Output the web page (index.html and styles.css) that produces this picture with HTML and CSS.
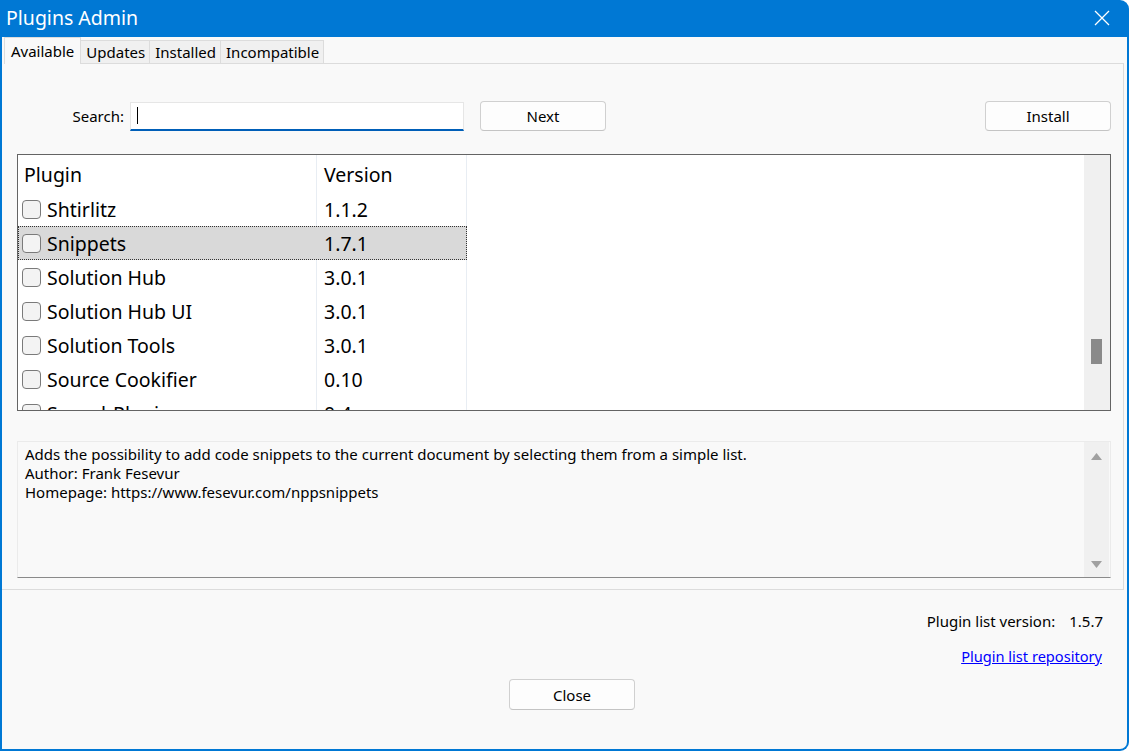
FILE: index.html
```html
<!DOCTYPE html>
<html>
<head>
<meta charset="utf-8">
<link rel="stylesheet" href="styles.css">
</head>
<body>
<div class="window">
  <div class="titlebar">
    <span class="title">Plugins Admin</span>
    <svg class="close-x" width="16" height="16" viewBox="0 0 16 16"><path d="M1 1L15 15M15 1L1 15" stroke="#fff" stroke-width="1.3" fill="none"/></svg>
  </div>
  <div class="client">
    <div class="tabs">
      <div class="tab active">Available</div>
      <div class="tab">Updates</div>
      <div class="tab">Installed</div>
      <div class="tab">Incompatible</div>
      <div class="tab-fill"></div>
    </div>
    <div class="panel">
      <div class="search-row">
        <label class="search-label">Search:</label>
        <div class="search-input"><span class="caret"></span></div>
        <button class="btn next">Next</button>
        <div class="spacer"></div>
        <button class="btn install">Install</button>
      </div>
      <div class="list">
        <div class="list-body">
          <div class="row header"><div class="c1"><span class="htext">Plugin</span></div><div class="c2">Version</div></div>
          <div class="row"><div class="c1"><span class="cb"></span>Shtirlitz</div><div class="c2">1.1.2</div></div>
          <div class="row selected"><div class="c1"><span class="cb"></span>Snippets</div><div class="c2">1.7.1</div></div>
          <div class="row"><div class="c1"><span class="cb"></span>Solution Hub</div><div class="c2">3.0.1</div></div>
          <div class="row"><div class="c1"><span class="cb"></span>Solution Hub UI</div><div class="c2">3.0.1</div></div>
          <div class="row"><div class="c1"><span class="cb"></span>Solution Tools</div><div class="c2">3.0.1</div></div>
          <div class="row"><div class="c1"><span class="cb"></span>Source Cookifier</div><div class="c2">0.10</div></div>
          <div class="row"><div class="c1"><span class="cb"></span>SpeechPlugin</div><div class="c2">0.4</div></div>
        </div>
        <div class="vscroll"><div class="thumb"></div></div>
      </div>
      <div class="desc">
        <div class="desc-text">Adds the possibility to add code snippets to the current document by selecting them from a simple list.<br>Author: Frank Fesevur<br>Homepage: https://www.fesevur.com/nppsnippets</div>
        <div class="dscroll">
          <svg width="11" height="7" viewBox="0 0 11 7"><path d="M0 7L5.5 0L11 7Z" fill="#a0a0a0"/></svg>
          <svg width="11" height="7" viewBox="0 0 11 7"><path d="M0 0L5.5 7L11 0Z" fill="#a0a0a0"/></svg>
        </div>
      </div>
    </div>
    <div class="footer">
      <div class="ver"><span>Plugin list version:</span><span>1.5.7</span></div>
      <a class="repo" href="#">Plugin list repository</a>
      <div class="close-row"><button class="btn close">Close</button></div>
    </div>
  </div>
</div>
</body>
</html>
```

FILE: styles.css
```css
html, body {
  margin: 0;
  padding: 0;
  background: #ffffff;
}
body {
  font-family: "Noto Sans", "Open Sans", sans-serif;
  color: #000;
}
.window {
  width: 1129px;
  height: 751px;
  box-sizing: border-box;
  background: #0078d4;
  border-radius: 0 9px 9px 0;
  padding: 0 2px 2px 2px;
  display: flex;
  flex-direction: column;
  overflow: hidden;
}
.titlebar {
  height: 37px;
  flex: none;
  display: flex;
  align-items: center;
  justify-content: space-between;
  padding: 0 17px 0 4px;
  color: #fff;
}
.title {
  font-size: 19.5px;
  position: relative;
  top: -1px;
}
.close-x {
  margin-top: -1px;
}
.client {
  flex: 1;
  background: #f9f9f9;
  border-radius: 0 0 7px 0;
  display: flex;
  flex-direction: column;
}
.tabs {
  display: flex;
  height: 27px;
  align-items: flex-end;
  font-size: 15px;
  padding-left: 2px;
}
.tab {
  height: 24px;
  box-sizing: border-box;
  background: #f0f0f0;
  border: 1px solid #dcdcdc;
  border-bottom: none;
  border-left: none;
  padding: 0 4px 0 5px;
  line-height: 23px;
  box-shadow: inset 0 -1px 0 #dcdcdc;
}
.tab.active {
  height: 27px;
  background: #f9f9f9;
  border-left: 1px solid #dcdcdc;
  box-shadow: none;
  padding: 0 6px;
  line-height: 27px;
}
.tab-fill {
  flex: 1;
  height: 1px;
  background: #dcdcdc;
  margin-right: 3px;
}
.panel {
  height: 526px;
  box-sizing: border-box;
  border-right: 1px solid #dcdcdc;
  border-bottom: 1px solid #dcdcdc;
  margin-right: 3px;
  padding: 37px 12px 0 15px;
  display: flex;
  flex-direction: column;
}
.search-row {
  display: flex;
  align-items: center;
  height: 30px;
  font-size: 15px;
}
.search-label {
  width: 107px;
  text-align: right;
  padding-right: 6px;
  flex: none;
}
.search-input {
  width: 334px;
  height: 29px;
  box-sizing: border-box;
  background: #fff;
  border: 1px solid #e6e6e6;
  border-bottom: 2px solid #005fb8;
  display: flex;
  align-items: center;
  padding-left: 6px;
}
.caret {
  width: 1px;
  height: 17px;
  background: #000;
}
.btn {
  font-family: inherit;
  font-size: 15px;
  width: 126px;
  height: 30px;
  background: #fdfdfd;
  border: 1px solid #d0d0d0;
  border-bottom-color: #c4c4c4;
  border-radius: 4px;
  color: #000;
  padding: 0;
}
.next {
  margin-left: 16px;
}
.spacer {
  flex: 1;
}
.list {
  margin-top: 23px;
  height: 257px;
  box-sizing: border-box;
  border: 1px solid #646464;
  background: #fff;
  display: flex;
  overflow: hidden;
}
.list-body {
  flex: 1;
  display: flex;
  flex-direction: column;
  font-size: 19.5px;
  background: linear-gradient(#e8edf3, #e8edf3) 298px 0 / 1px 100% no-repeat,
              linear-gradient(#e8edf3, #e8edf3) 448px 0 / 1px 100% no-repeat,
              #fff;
}
.row {
  display: flex;
  height: 34px;
  flex: none;
  align-items: center;
  width: 449px;
  box-sizing: border-box;
}
.row.header {
  height: 37px;
  padding-top: 2px;
}
.c1 {
  width: 299px;
  display: flex;
  align-items: center;
  padding-left: 4px;
  box-sizing: border-box;
}
.header .c1 {
  padding-left: 6px;
}
.c2 {
  padding-left: 7px;
}
.cb {
  width: 19px;
  height: 19px;
  box-sizing: border-box;
  border: 1px solid #7a7a7a;
  border-radius: 4px;
  background: #f3f3f3;
  margin-right: 6px;
  flex: none;
}
.row.selected {
  background: #d9d9d9;
  outline: 1px dotted #333;
  outline-offset: -1px;
}
.vscroll {
  width: 26px;
  flex: none;
  background: #f0f0f0;
  position: relative;
}
.thumb {
  position: absolute;
  left: 7px;
  top: 184px;
  width: 11px;
  height: 25px;
  background: #8a8a8a;
}
.desc {
  margin-top: 30px;
  height: 137px;
  box-sizing: border-box;
  border: 1px solid #ebebeb;
  border-bottom: 1px solid #8a8a8a;
  background: #f9f9f9;
  display: flex;
}
.desc-text {
  flex: 1;
  font-size: 15px;
  line-height: 19px;
  padding: 3px 7px;
}
.dscroll {
  width: 25px;
  background: #f0f0f0;
  display: flex;
  flex-direction: column;
  justify-content: space-between;
  align-items: center;
  padding: 11px 0 9px;
  box-sizing: border-box;
  margin: 0 1px 0 0;
}
.footer {
  flex: 1;
  display: flex;
  flex-direction: column;
  align-items: flex-end;
  padding: 20px 24px 0 0;
  font-size: 15px;
}
.ver {
  display: flex;
  gap: 14px;
  height: 22px;
  align-items: center;
}
.repo {
  margin-top: 13px;
  color: #0000ff;
  text-decoration: underline;
  height: 22px;
  line-height: 22px;
  margin-right: 1px;
  font-size: 14.6px;
}
.close-row {
  align-self: stretch;
  display: flex;
  justify-content: center;
  margin-top: 12px;
  padding-left: 40px;
}
.close {
  height: 31px;
  margin-left: -1px;
}
```
